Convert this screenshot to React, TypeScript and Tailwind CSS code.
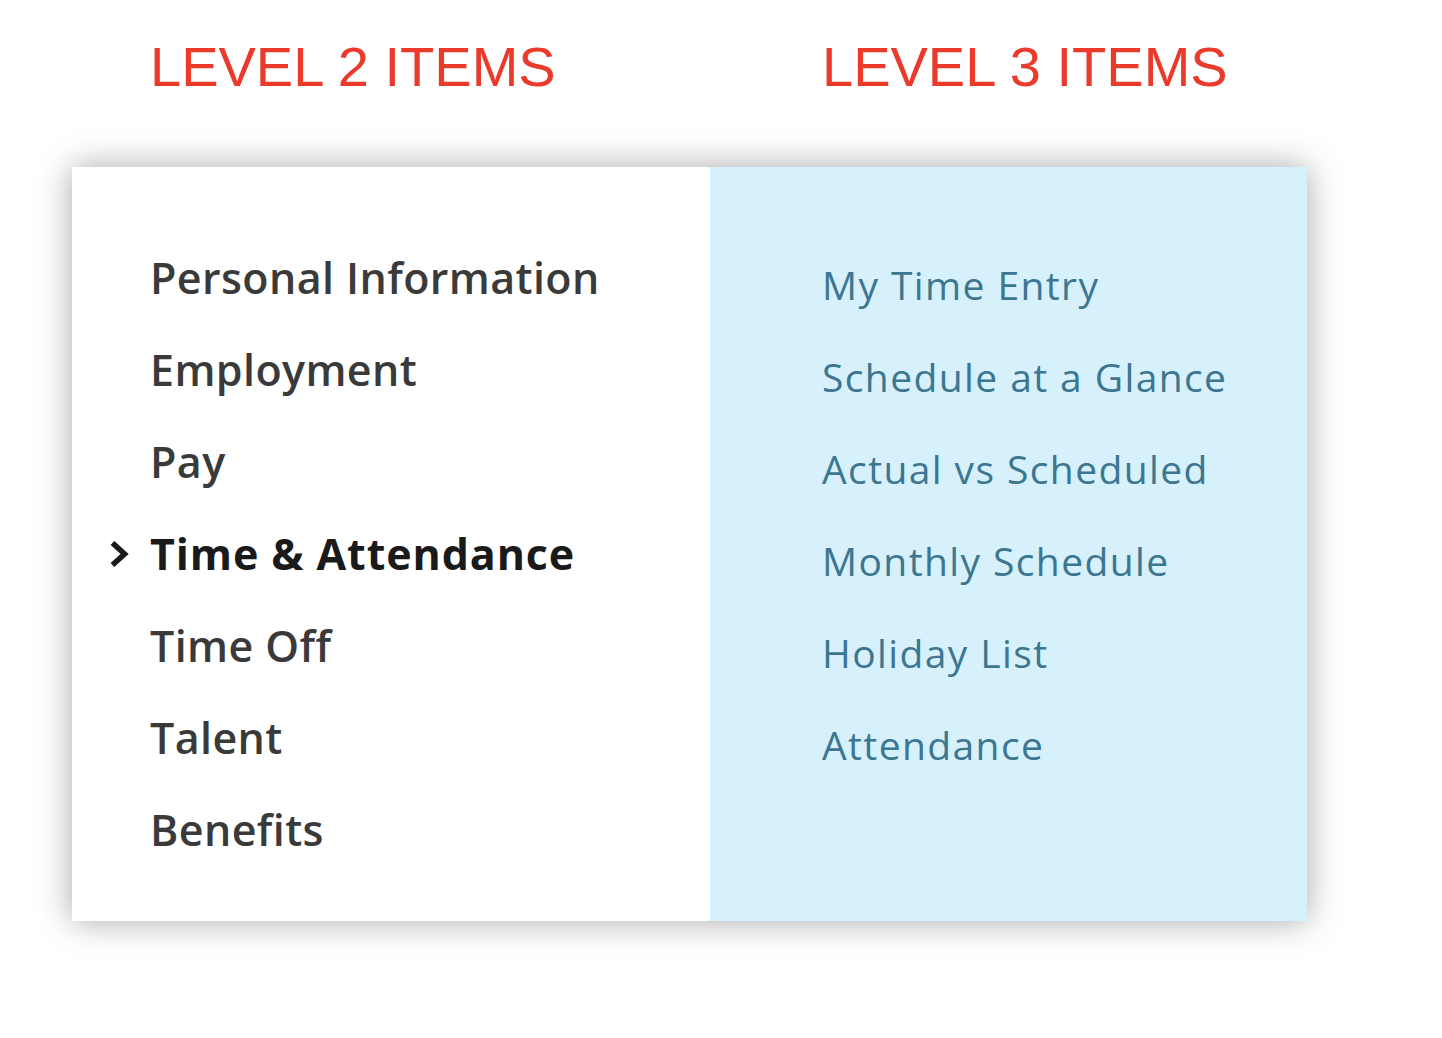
const level2 = [
  'Personal Information',
  'Employment',
  'Pay',
  'Time & Attendance',
  'Time Off',
  'Talent',
  'Benefits',
]

const level3 = [
  'My Time Entry',
  'Schedule at a Glance',
  'Actual vs Scheduled',
  'Monthly Schedule',
  'Holiday List',
  'Attendance',
]

const active = 'Time & Attendance'

export default function App() {
  return (
    <main className="w-[1442px] h-[1038px] bg-white overflow-hidden font-['Liberation_Sans',Arial,sans-serif]">
      {/* headings */}
      <div className="flex pt-[32px] h-[167px]">
        <h2 className="ml-[150px] w-[672px] text-[56px] leading-[70px] text-[#ea3a2b]">
          LEVEL 2 ITEMS
        </h2>
        <h2 className="text-[56px] leading-[70px] text-[#ea3a2b]">
          LEVEL 3 ITEMS
        </h2>
      </div>

      {/* menu panel */}
      <div className="ml-[72px] w-[1235px] h-[754px] flex shadow-[0_0_32px_rgba(0,0,0,0.35)]">
        <ul className="w-[638px] bg-white pl-[78px] pt-[65px] font-['Open_Sans',sans-serif]">
          {level2.map((item) => (
            <li
              key={item}
              className={`relative h-[92px] leading-[92px] text-[43px] ${
                item === active
                  ? 'font-bold tracking-[0.9px] text-[#1a1a1a]'
                  : 'font-semibold tracking-[0.4px] text-[#3a3a3a]'
              }`}
            >
              {item === active && (
                <svg
                  viewBox="0 0 24 28"
                  className="absolute left-[-41px] top-[33px] w-[22px] h-[26px]"
                  fill="none"
                  stroke="#1a1a1a"
                  strokeWidth={6}
                  strokeLinecap="square"
                  strokeLinejoin="miter"
                >
                  <polyline points="6,4 17,14 6,24" />
                </svg>
              )}
              {item}
            </li>
          ))}
        </ul>
        <ul className="flex-1 bg-[#d6f1fb] pl-[112px] pt-[72px] font-['Open_Sans',sans-serif]">
          {level3.map((item) => (
            <li key={item} className="h-[92px] leading-[92px] text-[39px] tracking-[1.4px] font-medium text-[#3d7690]">
              {item}
            </li>
          ))}
        </ul>
      </div>
    </main>
  )
}
